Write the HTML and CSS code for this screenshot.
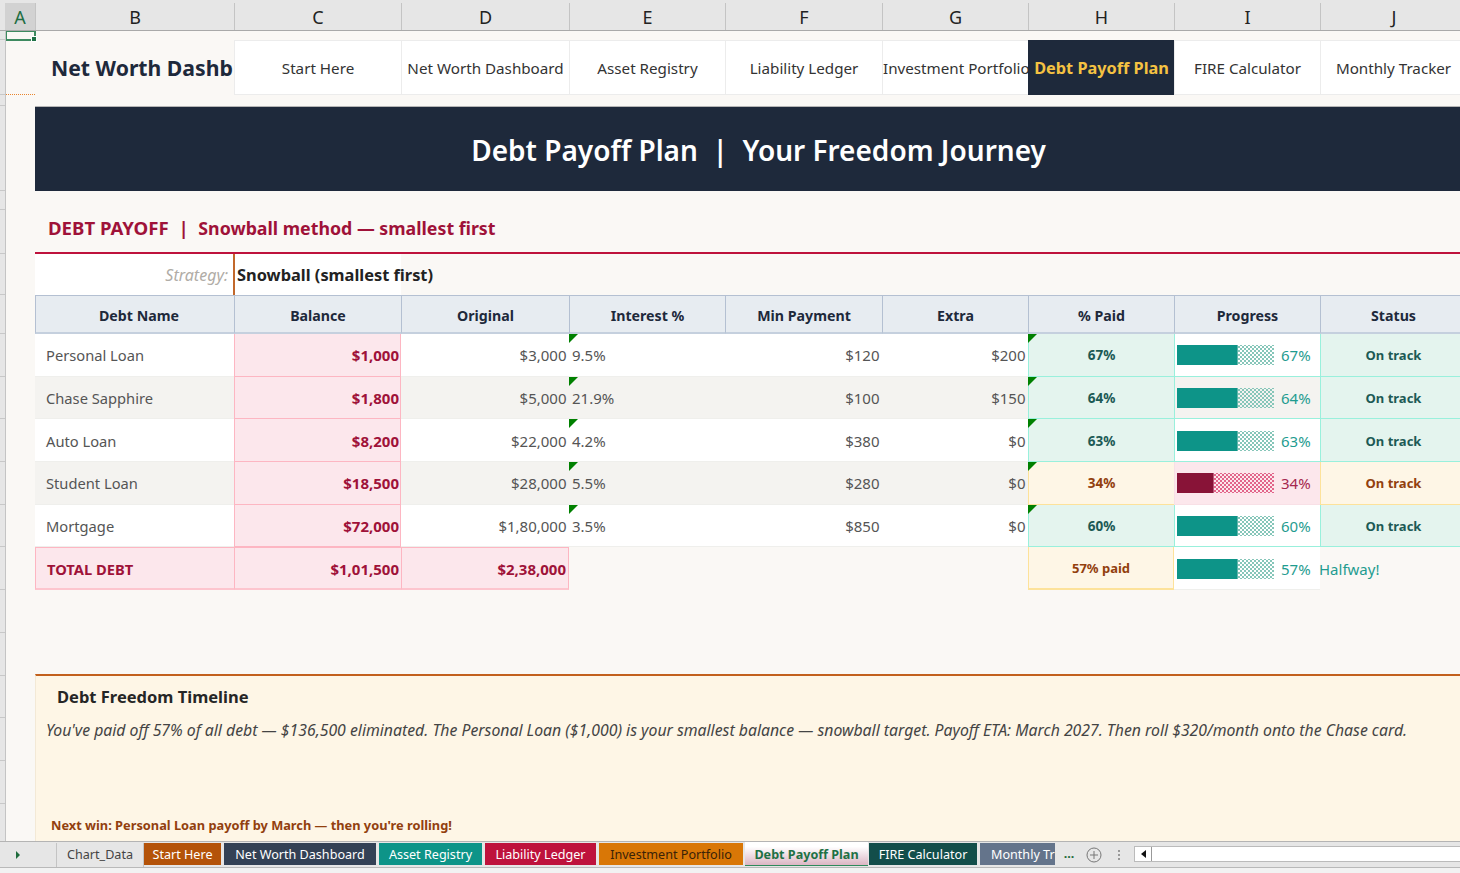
FILE: index.html
```html
<!DOCTYPE html>
<html lang="en">
<head>
<meta charset="utf-8">
<title>Debt Payoff Plan</title>
<link rel="stylesheet" href="styles.css">
</head>
<body>
<div class="app">
  <header class="colhead">
    <div class="corner"></div>
    <div class="ch sel">A</div><div class="ch">B</div><div class="ch">C</div><div class="ch">D</div><div class="ch">E</div><div class="ch">F</div><div class="ch">G</div><div class="ch">H</div><div class="ch">I</div><div class="ch last">J</div>
  </header>
  <div class="main">
    <div class="rowhead">
      <i></i><i></i><i></i><i></i><i></i><i></i><i></i><i></i><i></i><i></i><i></i><i></i><i></i><i></i><i></i><i></i><i></i><i></i><i></i><i></i>
    </div>
    <div class="sheet">
      <div class="selcell"><span class="handle"></span></div>
      <div class="row nav">
        <div class="a page-break"></div>
        <div class="brand">Net Worth Dashb</div>
        <div class="navc">Start Here</div>
        <div class="navc">Net Worth Dashboard</div>
        <div class="navc">Asset Registry</div>
        <div class="navc">Liability Ledger</div>
        <div class="navc clip">Investment Portfolio</div>
        <div class="navc active">Debt Payoff Plan</div>
        <div class="navc">FIRE Calculator</div>
        <div class="navc">Monthly Tracker</div>
      </div>
      <div class="banner">Debt Payoff Plan&nbsp; |&nbsp; Your Freedom Journey</div>
      <div class="sect"><span class="caps">DEBT PAYOFF&nbsp; |&nbsp; </span>Snowball method — smallest first</div>
      <div class="row strat">
        <div class="a"></div>
        <div class="lbl">Strategy:</div>
        <div class="val">Snowball (smallest first)</div>
      </div>
      <div class="row thead">
        <div class="a"></div>
        <div class="th thname">Debt Name</div><div class="th">Balance</div><div class="th">Original</div><div class="th">Interest %</div><div class="th">Min Payment</div><div class="th">Extra</div><div class="th">% Paid</div><div class="th">Progress</div><div class="th">Status</div>
      </div>

      <div class="row tr">
        <div class="a"></div>
        <div class="td name">Personal Loan</div><div class="td bal">$1,000</div><div class="td num">$3,000</div><div class="td int">9.5%</div><div class="td num">$120</div><div class="td num">$200</div>
        <div class="td pct good">67%</div>
        <div class="td prog"><span class="bar"><span class="fill" style="width:61px"></span></span><span class="pv">67%</span></div>
        <div class="td stat good">On track</div>
      </div>
      <div class="row tr alt">
        <div class="a"></div>
        <div class="td name">Chase Sapphire</div><div class="td bal">$1,800</div><div class="td num">$5,000</div><div class="td int">21.9%</div><div class="td num">$100</div><div class="td num">$150</div>
        <div class="td pct good">64%</div>
        <div class="td prog"><span class="bar"><span class="fill" style="width:61px"></span></span><span class="pv">64%</span></div>
        <div class="td stat good">On track</div>
      </div>
      <div class="row tr">
        <div class="a"></div>
        <div class="td name">Auto Loan</div><div class="td bal">$8,200</div><div class="td num">$22,000</div><div class="td int">4.2%</div><div class="td num">$380</div><div class="td num">$0</div>
        <div class="td pct good">63%</div>
        <div class="td prog"><span class="bar"><span class="fill" style="width:61px"></span></span><span class="pv">63%</span></div>
        <div class="td stat good">On track</div>
      </div>
      <div class="row tr alt">
        <div class="a"></div>
        <div class="td name">Student Loan</div><div class="td bal">$18,500</div><div class="td num">$28,000</div><div class="td int">5.5%</div><div class="td num">$280</div><div class="td num">$0</div>
        <div class="td pct warn">34%</div>
        <div class="td prog bad"><span class="bar"><span class="fill" style="width:37px"></span></span><span class="pv">34%</span></div>
        <div class="td stat warn">On track</div>
      </div>
      <div class="row tr">
        <div class="a"></div>
        <div class="td name">Mortgage</div><div class="td bal">$72,000</div><div class="td num">$1,80,000</div><div class="td int">3.5%</div><div class="td num">$850</div><div class="td num">$0</div>
        <div class="td pct good">60%</div>
        <div class="td prog"><span class="bar"><span class="fill" style="width:61px"></span></span><span class="pv">60%</span></div>
        <div class="td stat good">On track</div>
      </div>
      <div class="row tr total">
        <div class="a"></div>
        <div class="td tname">TOTAL DEBT</div><div class="td tbal">$1,01,500</div><div class="td tbal">$2,38,000</div>
        <div class="blank"></div>
        <div class="td pct warn tpct">57% paid</div>
        <div class="td prog"><span class="bar"><span class="fill" style="width:61px"></span></span><span class="pv">57%</span></div>
        <div class="halfway">Halfway!</div>
      </div>
      <div class="callout">
        <h2>Debt Freedom Timeline</h2>
        <p class="body">You've paid off 57% of all debt — $136,500 eliminated. The Personal Loan ($1,000) is your smallest balance — snowball target. Payoff ETA: March 2027. Then roll $320/month onto the Chase card.</p>
        <p class="win">Next win: Personal Loan payoff by March — then you're rolling!</p>
      </div>
    </div>
  </div>
  <footer class="tabbar">
    <div class="tnav"><svg width="6" height="8" viewBox="0 0 6 8"><path d="M1 0l4 4-4 4z" fill="#1e6b3c"/></svg></div>
    <div class="tab plain">Chart_Data</div>
    <div class="tab t1">Start Here</div>
    <div class="tab t2">Net Worth Dashboard</div>
    <div class="tab t3">Asset Registry</div>
    <div class="tab t4">Liability Ledger</div>
    <div class="tab t5">Investment Portfolio</div>
    <div class="tab cur">Debt Payoff Plan</div>
    <div class="tab t6">FIRE Calculator</div>
    <div class="tab t7">Monthly Tr</div>
    <div class="more">...</div>
    <svg class="plus" width="16" height="16" viewBox="0 0 16 16"><circle cx="8" cy="8" r="7" fill="none" stroke="#777" stroke-width="1"/><path d="M8 4v8M4 8h8" stroke="#777" stroke-width="1"/></svg>
    <div class="dots"><i></i><i></i><i></i></div>
    <div class="scroll"><div class="sbtn"><svg width="5" height="8" viewBox="0 0 5 8"><path d="M5 0L0 4l5 4z" fill="#111"/></svg></div></div>
  </footer>
</div>
</body>
</html>
```
FILE: styles.css
```css
* { box-sizing: border-box; }
html, body { margin: 0; height: 100%; overflow: hidden; }
body { font-family: "Noto Sans", "Open Sans", sans-serif; background: #e6e6e6; color: #333; }
.app { width: 1460px; height: 873px; display: flex; flex-direction: column; overflow: hidden; }

.colhead { height: 31px; flex: none; display: grid; grid-template-columns: 5px 31px 199px 167px 168px 156px 157px 146px 146px 146px 146px; background: #e6e6e6; border-bottom: 1px solid #a9a9a9; }
.ch { font-size: 18px; line-height: 1; display: flex; align-items: center; justify-content: center; color: #222; border-right: 1px solid #c4c4c4; margin-top: 3px; }
.ch.last { border-right: 0; }
.ch.sel { background: #d2d2d2; color: #1f6e43; }

.main { flex: 1; min-height: 0; display: flex; }
.rowhead { width: 6px; flex: none; background: #e6e6e6; display: flex; flex-direction: column; border-right: 1px solid #c4c4c4; }
.rowhead i { height: 42.7px; flex: none; border-bottom: 1px solid #c8c8c8; }
.rowhead i:nth-child(1) { height: 9px; }
.rowhead i:nth-child(2) { height: 55px; }
.rowhead i:nth-child(3) { height: 11px; }
.rowhead i:nth-child(4) { height: 85px; }
.rowhead i:nth-child(5) { height: 19px; }
.rowhead i:nth-child(6) { height: 44px; }
.rowhead i:nth-child(7) { height: 41px; }
.rowhead i:nth-child(8) { height: 39px; }

.sheet { flex: 1; min-width: 0; background: #faf8f5; position: relative; overflow: hidden; padding-top: 9px; }
.selcell { position: absolute; left: -1px; top: 0; width: 31px; height: 10px; border: 2px solid #3d8a60; border-top-width: 1px; }
.handle { position: absolute; right: -3px; bottom: -3px; width: 6px; height: 6px; background: #1f7246; border: 1px solid #fff; }

.row { display: grid; grid-template-columns: 29px 199px 167px 168px 156px 157px 146px 146px 146px 146px; }
.a { background: transparent; }
.nav { height: 55px; }
.page-break { border-bottom: 1px dotted #e8852e; height: 55px; }
.brand { font-size: 21.2px; font-weight: 700; color: #1e293b; padding: 0 0 1px 16px; display: flex; align-items: center; white-space: nowrap; overflow: hidden; }
.navc { background: #fff; border-left: 1px solid #ececec; border-bottom: 1px solid #ececec; border-top: 1px solid #ececec; font-size: 15.2px; color: #333; display: flex; align-items: center; justify-content: center; white-space: nowrap; overflow: hidden; }
.navc.clip { justify-content: flex-start; }
.navc.active { background: #1e293b; color: #f5c242; font-weight: 700; font-size: 16.3px; border-color: #1e293b; }

.banner { margin: 11px 0 0 29px; height: 85px; background: #1e293b; border-top: 1px solid #b5b5b5; color: #fff; font-size: 28px; font-weight: 600; display: flex; align-items: center; justify-content: center; white-space: nowrap; width: 1447px; padding-top: 1px; }

.sect { margin: 19px 0 0 29px; height: 44px; color: #9f1239; font-size: 17.8px; font-weight: 700; padding: 5px 0 0 13px; border-bottom: 2px solid #be123c; }
.caps { font-size: 18.6px; }

.strat { height: 41px; }
.lbl { background: #fff; font-size: 16px; font-style: italic; color: #b0aca6; padding-right: 6px; display: flex; align-items: center; justify-content: flex-end; }
.val { background: #fff; font-size: 16.4px; font-weight: 700; color: #222; display: flex; align-items: center; padding-left: 2px; white-space: nowrap; border-left: 2px solid #c2682b; margin-left: -1px; }

.thead { height: 39px; }
.th { background: #e7ecf1; border-left: 1px solid #b4c0d2; border-top: 1px solid #b4c0d2; border-bottom: 2px solid #c5d0de; font-size: 14.2px; font-weight: 700; color: #1e293b; display: flex; align-items: center; justify-content: center; padding-top: 2px; }
.thname { padding-left: 8px; }

.tr { height: 42.7px; }
.td { background: #fff; font-size: 15px; color: #555; display: flex; align-items: center; border-bottom: 1px solid #efefec; white-space: nowrap; padding-top: 1px; }
.alt .td { background: #f4f3f0; }
.name { padding-left: 11px; font-size: 14.7px; }
.bal, .alt .bal { background: #fce7ec; color: #9f1239; font-weight: 700; justify-content: flex-end; padding-right: 1px; border-left: 1px solid #fdb6c2; border-bottom: 1px solid #fdb6c2; border-right: 1px solid #fdb6c2; }
.num { justify-content: flex-end; padding-right: 2.5px; }
.int { padding-left: 3px; position: relative; }
.int::before, .tr:not(.total) .pct::before { position: absolute; left: 0; top: 0; width: 0; height: 0; border-top: 9px solid #008000; border-right: 9px solid transparent; content: ""; }
.tr:not(.total) .pct::before { left: -1px; }

.pct, .alt .pct, .stat, .alt .stat { font-size: 13.5px; font-weight: 700; justify-content: center; position: relative; }
.stat, .alt .stat { font-size: 13px; }
.good, .alt .good { background: #e4f4ee; color: #1c5a55; border: 1px solid #99f0dc; border-top: 0; border-right: 0; }
.warn, .alt .warn { background: #fef6e6; color: #92400e; border: 1px solid #fde29a; border-top: 0; border-right: 0; }

.prog { padding-left: 2px; border-left: 1px solid #99f0dc; border-bottom: 1px solid #99f0dc; }
.alt .prog.bad { background: #fce7ec; border-color: #f8e0e6; }
.bar { width: 97px; height: 20px; display: block; flex: none; background: radial-gradient(circle, #86c6b9 .8px, transparent 1.1px) 0 0 / 4px 4px, radial-gradient(circle, #86c6b9 .8px, transparent 1.1px) 2px 2px / 4px 4px; }
.fill { display: block; height: 20px; background: #0d9488; border-right: 1px solid #5fb5aa; }
.bad .bar { background: radial-gradient(circle, #e2648a .8px, transparent 1.1px) 0 0 / 4px 4px, radial-gradient(circle, #e2648a .8px, transparent 1.1px) 2px 2px / 4px 4px; }
.bad .fill { background: #881337; border-right-color: #b85a78; }
.pv { font-size: 15px; color: #1f9c90; margin-left: 7px; }
.bad .pv { color: #a5284f; }

.total { height: 42.3px; }
.tname, .tbal { background: #fce7ec; color: #9f1239; font-weight: 700; border-left: 1px solid #fdb6c2; border-top: 1px solid #fdb6c2; border-bottom: 2px solid #fdc5ce; }
.tname { padding-left: 11px; font-size: 14.7px; }
.tbal { justify-content: flex-end; padding-right: 2px; }
.tbal:nth-child(4) { border-right: 1px solid #fdb6c2; }
.blank { grid-column: span 3; }
.tpct { border: 1px solid #fde29a; border-top: 0; border-bottom: 2px solid #fde29a; font-size: 13px; }
.total .prog { border-left: 0; padding-left: 3px; border-bottom: 1px solid #efefec; }
.halfway { font-size: 15px; color: #1f9c90; display: flex; align-items: center; margin-left: -1px; }

.callout { margin: 84px 0 0 29px; height: 167px; background: #fef6e6; border-top: 2px solid #c2601d; border-left: 1px solid #f3e9d6; display: flex; flex-direction: column; }
.callout h2 { margin: 10px 0 0 21px; font-size: 16.5px; line-height: 22px; font-weight: 700; color: #262626; }
.callout .body { margin: 11px 0 0 10px; font-size: 15.8px; font-style: italic; color: #444; white-space: nowrap; line-height: 22px; }
.callout .win { margin: auto 0 7px 15px; font-size: 12.8px; font-weight: 700; color: #92400e; line-height: 18px; }

.tabbar { height: 32px; flex: none; background: linear-gradient(#e6e6e6 25px, #b9b9b9 25px 26px, #f2f2f2 26px); border-top: 1px solid #b4b4b4; display: flex; align-items: flex-start; font-size: 12.6px; white-space: nowrap; }
.tnav { width: 57px; height: 24px; margin-top: 1px; display: flex; align-items: center; padding-left: 15px; border-right: 1px solid #c4c4c4; flex: none; }
.tab { height: 22px; margin: 1px 3px 0 0; line-height: 24px; text-align: center; color: #fff; flex: none; overflow: hidden; }
.tab.plain { color: #444; width: 87px; height: 24px; line-height: 24px; margin-right: 0; padding-left: 10px; text-align: left; border-right: 1px solid #c4c4c4; }
.t1 { background: #b45309; width: 77px; margin-right: 3px; }
.t2 { background: #334155; width: 152px; }
.t3 { background: #0d9488; width: 103px; }
.t4 { background: #be123c; width: 111px; }
.t5 { background: #d97706; color: #3a2206; width: 144px; margin-right: 2px; }
.cur { background: linear-gradient(#fff 20%, #dcb6c4); color: #1e7145; font-weight: 700; width: 123px; height: 24px; line-height: 25px; margin: 0 1px 0 0; border-bottom: 1px solid #2f8a5c; }
.t6 { background: #134e4a; width: 108px; }
.t7 { background: #64748b; width: 75px; padding-left: 11px; text-align: left; margin-right: 0; }
.more { width: 27px; color: #1e6b3c; font-weight: 700; text-align: center; flex: none; padding-top: 3px; padding-left: 1px; }
.plus { margin: 5px 0 0 4px; flex: none; }
.dots { width: 34px; height: 16px; margin: 5px -2px 0 0; display: flex; flex-direction: column; align-items: center; justify-content: center; gap: 2px; flex: none; }
.dots i { width: 2px; height: 2px; background: #999; }
.scroll { flex: 1; height: 16px; margin-top: 4px; background: #fff; border: 1px solid #bbb; border-right: 0; display: flex; }
.sbtn { width: 17px; display: flex; align-items: center; justify-content: center; border-right: 1px solid #999; }
```
